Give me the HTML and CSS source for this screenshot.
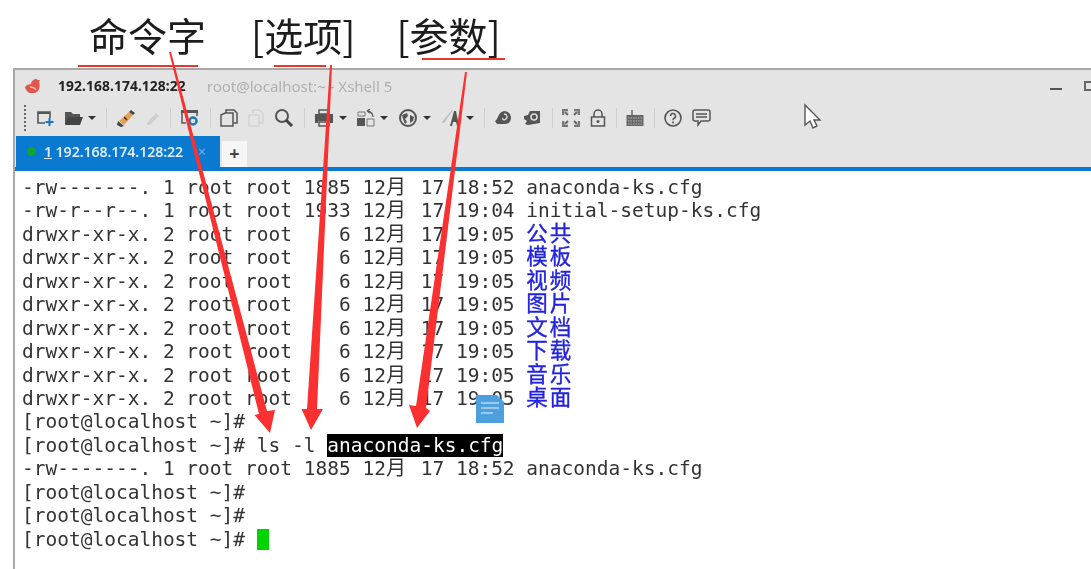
FILE: index.html
```html
<!DOCTYPE html>
<html lang="zh-CN">
<head>
<meta charset="utf-8">
<title>命令字 [选项] [参数]</title>
<link rel="stylesheet" href="styles.css">
</head>
<body>
<header class="syntax">
  <span>命令字</span>
  <span>[选项]</span>
  <span>[参数]</span>
</header>
<main class="window">
  <div class="titlebar">
    <svg class="logo" viewBox="0 0 20 18"><path d="M1 10c1-2 4-3 6-3 0-3 3-5 6-5 0 1 1 1 3 1l-1 2c1 3 1 6-1 9-3 3-9 3-11 0-1-1-2-3-2-4z" fill="#e0584c"/><path d="M6 10c3 0 5 1 6 3" stroke="#f6b5a8" stroke-width="1.4" fill="none"/></svg>
    <strong class="host">192.168.174.128:22</strong>
    <span class="subtitle">root@localhost:~ - Xshell 5</span>
    <div class="winctl"><i class="min"></i><i class="max"></i></div>
  </div>
  <div class="toolbar">
    <i class="grip"></i>
    <svg class="ic w18" viewBox="0 0 18 18"><path d="M14 9V3H2v11h7" fill="none" stroke="#555" stroke-width="1.6"/><path d="M2 3h12v2H2z" fill="#555"/><path d="M13.500 9v8M9.500 13h8" stroke="#1b75bb" stroke-width="2"/></svg>
    <svg class="ic w19" viewBox="0 0 19 18"><path d="M1 3h6l2 2h7v3H5l-3 7H1z" fill="#555"/><path d="M4 8h15l-3 8H1z" fill="#444"/></svg>
    <b class="caret"></b>
    <i class="sep"></i>
    <svg class="ic w20" viewBox="0 0 20 18"><path d="M3 12 13 3l4 3-9 10z" fill="#e9a04e"/><path d="M13 3l2-2 4 3-2 2zM2 12l6 5-3 1-4-2z" fill="#444"/><path d="M8 8l3 3" stroke="#333" stroke-width="1.500"/></svg>
    <svg class="ic w14 faded" viewBox="0 0 14 18"><path d="M1 14 10 4l3 3-9 9-3 0z" fill="#ccc"/></svg>
    <i class="sep"></i>
    <svg class="ic w20" viewBox="0 0 20 18"><path d="M1 1h17v3H1z" fill="#555"/><path d="M2 4v10h4M17 4v3" stroke="#555" stroke-width="1.500" fill="none"/><circle cx="13" cy="12" r="3.500" fill="none" stroke="#1f78b4" stroke-width="2.500"/></svg>
    <i class="sep"></i>
    <svg class="ic w18" viewBox="0 0 18 18"><path d="M6 4V1h8l3 3v10h-4M1 6l4-2h8v13H1z" fill="none" stroke="#555" stroke-width="1.500"/></svg>
    <svg class="ic w16 faded" viewBox="0 0 16 18"><path d="M5 4V1h6l4 3v10h-4M1 6h10v11H1z" fill="none" stroke="#d2d2d2" stroke-width="1.500"/></svg>
    <svg class="ic w20" viewBox="0 0 20 18"><circle cx="8" cy="7" r="6" fill="none" stroke="#555" stroke-width="2"/><path d="M12 11l6 6" stroke="#444" stroke-width="3"/></svg>
    <i class="sep"></i>
    <svg class="ic w20" viewBox="0 0 20 18"><path d="M5 1h10v4H5z" fill="none" stroke="#555" stroke-width="1.500"/><path d="M1 5h18v9h-3v-2H4v2H1z" fill="#555"/><path d="M5 13h10v4H5z" fill="none" stroke="#555" stroke-width="1.500"/></svg>
    <b class="caret"></b>
    <svg class="ic w18" viewBox="0 0 18 18"><path d="M0 9h8v8H0z" fill="#555"/><path d="M10 10h7v7h-7zM1 3h7v4H1z" fill="none" stroke="#777"/><path d="M10 2a6 6 0 0 1 6 6M10 2l3-2M10 2l3 2" fill="none" stroke="#555" stroke-width="1.300"/></svg>
    <b class="caret"></b>
    <svg class="ic w20" viewBox="0 0 20 18"><circle cx="10" cy="9" r="8" fill="none" stroke="#555" stroke-width="2"/><path d="M4 6l5-2 1 3-3 3 2 3-2 2-2-5zM12 6l4 2-1 4-3 2z" fill="#555"/></svg>
    <b class="caret"></b>
    <svg class="ic w20" viewBox="0 0 20 18"><path d="M1 13 11 1h1L3 14z" fill="#bbb"/><path d="M9 17l4-15h2l3 15h-2l-1-4h-3l-1 4z" fill="#555"/></svg>
    <b class="caret"></b>
    <i class="sep"></i>
    <svg class="ic w18" viewBox="0 0 18 18"><path d="M1 12c3-1 3-9 9-10 5 0 7 4 7 7s-2 6-6 6H3z" fill="#555"/><path d="M10 5c3 0 4 3 2 5s-4 0-3-1" fill="none" stroke="#ddd" stroke-width="1.300"/></svg>
    <svg class="ic w20" viewBox="0 0 20 18"><path d="M2 7l4-1 2-4h10v12l-12 2-3-1 2-3-3-2z" fill="#555"/><circle cx="12" cy="8" r="3" fill="none" stroke="#ddd" stroke-width="1.500"/></svg>
    <i class="sep"></i>
    <svg class="ic w18" viewBox="0 0 18 18"><path d="M1 6V1h5M12 1h5v5M17 12v5h-5M6 17H1v-5" fill="none" stroke="#777" stroke-width="2.500"/><path d="M3 3l3 3M15 3l-3 3M15 15l-3-3M3 15l3-3" stroke="#666" stroke-width="2"/></svg>
    <svg class="ic w16" viewBox="0 0 16 18"><path d="M4 8V5a4 4 0 0 1 8 0v3" fill="none" stroke="#555" stroke-width="1.500"/><rect x="1.500" y="8" width="13" height="9" fill="none" stroke="#555" stroke-width="1.500"/><circle cx="8" cy="12.500" r="1.500" fill="#555"/></svg>
    <i class="sep"></i>
    <svg class="ic w18" viewBox="0 0 18 18"><path d="M6 6V1" stroke="#666" stroke-width="1.500"/><rect x="0.500" y="6" width="17" height="11" fill="#666"/><path d="M2 9h14M2 12h14M2 15h14" stroke="#bbb" stroke-dasharray="1.500 1"/></svg>
    <i class="sep"></i>
    <svg class="ic w18" viewBox="0 0 18 18"><circle cx="9" cy="9" r="8" fill="none" stroke="#555" stroke-width="1.600"/><path d="M6.500 7a2.500 2.500 0 1 1 3.500 2.300c-.8.4-1 1-1 2" fill="none" stroke="#555" stroke-width="1.500"/><circle cx="9" cy="13.500" r="1" fill="#555"/></svg>
    <svg class="ic w19" viewBox="0 0 19 18"><path d="M3 1h13a2 2 0 0 1 2 2v7a2 2 0 0 1-2 2H9l-3 4v-4H3a2 2 0 0 1-2-2V3a2 2 0 0 1 2-2z" fill="none" stroke="#555" stroke-width="1.500"/><path d="M4 5h11M4 8h11" stroke="#555" stroke-width="1.300"/></svg>
  </div>
  <nav class="tabs">
    <div class="tab">
      <i class="dot"></i>
      <span><u>1</u> 192.168.174.128:22</span>
      <span class="close">×</span>
    </div>
    <div class="add">+</div>
  </nav>
  <div class="term">
    <div class="row">-rw-------. 1 root root 1885 12<span class="yue">月</span> 17 18:52 anaconda-ks.cfg</div>
    <div class="row">-rw-r--r--. 1 root root 1933 12<span class="yue">月</span> 17 19:04 initial-setup-ks.cfg</div>
    <div class="row">drwxr-xr-x. 2 root root    6 12<span class="yue">月</span> 17 19:05 <span class="dir">公共</span></div>
    <div class="row">drwxr-xr-x. 2 root root    6 12<span class="yue">月</span> 17 19:05 <span class="dir">模板</span></div>
    <div class="row">drwxr-xr-x. 2 root root    6 12<span class="yue">月</span> 17 19:05 <span class="dir">视频</span></div>
    <div class="row">drwxr-xr-x. 2 root root    6 12<span class="yue">月</span> 17 19:05 <span class="dir">图片</span></div>
    <div class="row">drwxr-xr-x. 2 root root    6 12<span class="yue">月</span> 17 19:05 <span class="dir">文档</span></div>
    <div class="row">drwxr-xr-x. 2 root root    6 12<span class="yue">月</span> 17 19:05 <span class="dir">下载</span></div>
    <div class="row">drwxr-xr-x. 2 root root    6 12<span class="yue">月</span> 17 19:05 <span class="dir">音乐</span></div>
    <div class="row">drwxr-xr-x. 2 root root    6 12<span class="yue">月</span> 17 19:05 <span class="dir">桌面</span></div>
    <div class="row">[root@localhost ~]#</div>
    <div class="row">[root@localhost ~]# ls -l <span class="sel">anaconda-ks.cfg</span></div>
    <div class="row">-rw-------. 1 root root 1885 12<span class="yue">月</span> 17 18:52 anaconda-ks.cfg</div>
    <div class="row">[root@localhost ~]#</div>
    <div class="row">[root@localhost ~]#</div>
    <div class="row">[root@localhost ~]# <span class="cursor"></span></div>
  </div>
</main>
<svg class="overlay" viewBox="0 0 1091 569" aria-hidden="true">
  <g fill="none" stroke="#e8372c" stroke-width="2">
    <path d="M78 66h120M274 66h52M422 59h83"/>
  </g>
  <g fill="#fb3030">
    <path d="M169 52 171 52 267 411 275 410 270 433 254.500 415 259 414z"/>
    <path d="M330 65 332 65 317 409 323 409 311 430 301.500 409 307 409z"/>
    <path d="M465 72 467 72 426 408 430 411 417 428 409 405 416 406z"/>
  </g>
  <g>
    <path d="M476 395h21l7 7v21h-28z" fill="#4d9fdd"/>
    <path d="M481 403h18M481 408h18M481 413h12" stroke="#b7d9f2" stroke-width="1.500"/>
  </g>
  <path d="M805 105v20l5-4 3 7 4-2-3-6h6z" fill="#fff" stroke="#555" stroke-width="1.400"/>
</svg>
</body>
</html>
```
FILE: styles.css
```css
* { box-sizing: border-box; }
html, body { margin: 0; padding: 0; }
body {
  position: relative;
  width: 1091px;
  height: 569px;
  overflow: hidden;
  background: #fff;
  font-family: "Noto Sans", "Noto Sans CJK SC", sans-serif;
}
.syntax {
  display: flex;
  gap: 41px;
  height: 68px;
  padding: 7px 0 0 89px;
  font-family: "Noto Sans CJK SC", sans-serif;
  font-size: 39px;
  line-height: 54px;
  color: #1c1c1c;
  filter: blur(.35px);
}
.syntax span:first-child { margin-right: 4px; }
.window {
  height: 501px;
  margin-left: 13px;
  border-left: 2px solid #a8a8a8;
  border-top: 2px solid #a8a8a8;
  background: #e4e4e4;
}
.titlebar {
  position: relative;
  display: flex;
  align-items: center;
  height: 31px;
  padding-left: 9px;
  filter: blur(.4px);
}
.logo { width: 20px; height: 18px; }
.host {
  margin-left: 14px;
  font-size: 13.800px;
  letter-spacing: .1px;
  color: #222;
}
.subtitle {
  margin-left: 21px;
  font-size: 15px;
  color: #b0b0b0;
}
.winctl {
  position: absolute;
  right: 0;
  top: 0;
  display: flex;
  gap: 22px;
  width: 41px;
  height: 31px;
}
.min { width: 12px; height: 2px; margin-top: 18px; background: #555; flex: none; }
.max { width: 10px; height: 10px; margin-top: 11px; border: 2px solid #666; flex: none; }
.toolbar {
  display: flex;
  align-items: center;
  gap: 10px;
  height: 34px;
  padding-left: 9px;
  filter: blur(.45px);
}
.grip {
  width: 2px;
  height: 26px;
  border-left: 2px dotted #666;
}
.ic { height: 18px; flex: none; }
.w14 { width: 14px; }
.w16 { width: 16px; }
.w18 { width: 18px; }
.w19 { width: 19px; }
.w20 { width: 20px; }
.faded { opacity: .9; }
.caret {
  width: 0;
  height: 0;
  margin-left: -5px;
  border: 4px solid transparent;
  border-top-color: #333;
  border-bottom-width: 0;
}
.sep { width: 1px; height: 20px; margin: 0 -.5px; background: #cfcfcf; }
.tabs {
  display: flex;
  align-items: flex-end;
  height: 36px;
  padding-left: 1px;
  border-bottom: 4px solid #0a7ad1;
}
.tab {
  display: flex;
  align-items: center;
  width: 204px;
  height: 31px;
  padding: 0 0 0 11px;
  background: #0a7ad1;
  color: #dcecf8;
  font-size: 14.200px;
  font-weight: 600;
  letter-spacing: -.1px;
  filter: blur(.3px);
}
.dot { width: 9px; height: 9px; border-radius: 50%; background: #0ea630; flex: none; }
.tab span:first-of-type { margin-left: 8px; white-space: pre; }
.close { margin-left: 15px; font-weight: 400; color: #6fb0e2; }
.add {
  width: 25px;
  height: 26px;
  margin-left: 2px;
  background: #f6f6f6;
  text-align: center;
  font-size: 18px;
  font-weight: 700;
  line-height: 25px;
  color: #444;
}
.term {
  height: 399px;
  padding: 5px 0 0 7px;
  background: #fff;
  font-family: "DejaVu Sans Mono", monospace;
  font-size: 19.500px;
  color: #333;
  filter: blur(.35px);
}
.row {
  height: 23.450px;
  line-height: 23.450px;
  white-space: pre;
}
.yue {
  font-family: "Noto Sans CJK SC", sans-serif;
  font-size: 20px;
  line-height: 0;
  margin-right: 3px;
}
.dir {
  font-family: "Noto Sans CJK SC", sans-serif;
  font-size: 21.500px;
  letter-spacing: 2px;
  line-height: 0;
  color: #2222e0;
  -webkit-text-stroke: .35px #2222e0;
}
.sel { background: #000; color: #fff; }
.cursor {
  display: inline-block;
  width: 12px;
  height: 21px;
  vertical-align: -4px;
  background: #00d400;
}
.overlay {
  position: absolute;
  left: 0;
  top: 0;
  width: 1091px;
  height: 569px;
  pointer-events: none;
}
```
